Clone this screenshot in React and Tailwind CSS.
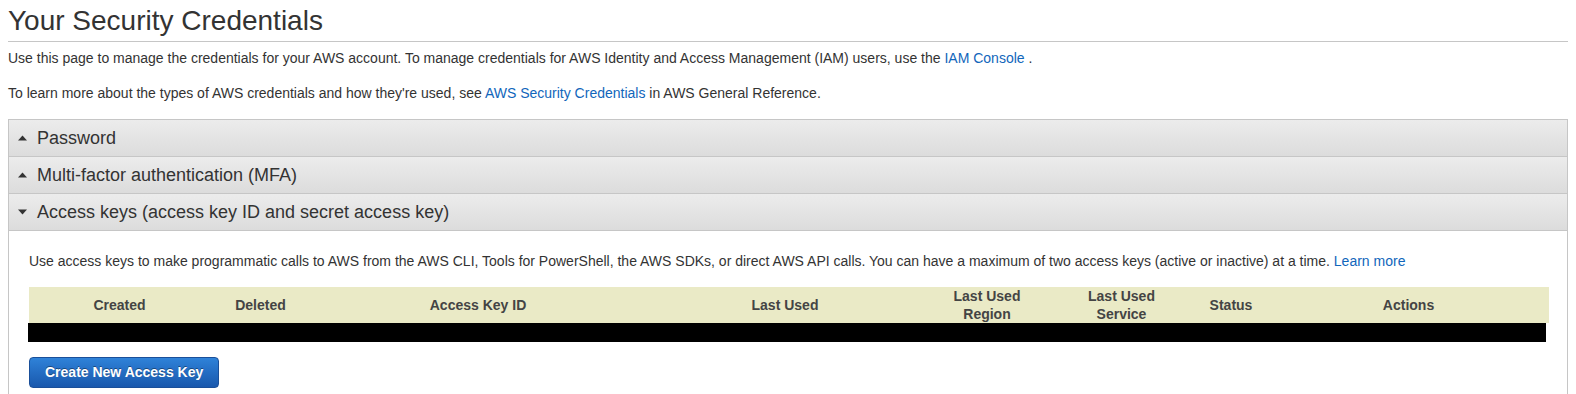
const Caret = ({ open }) => (
    <svg width="9" height="6" viewBox="0 0 9 6" className="mr-[10px] shrink-0">
        {open ? (
            <polygon points="0,0.5 9,0.5 4.5,5.5" fill="#333" />
        ) : (
            <polygon points="0,5.5 9,5.5 4.5,0.5" fill="#333" />
        )}
    </svg>
);

const Section = ({ title, open }) => (
    <div className="flex items-center h-[37px] pl-[9px] border-b border-[#c6c6c6] bg-gradient-to-b from-[#ececec] to-[#dcdcdc] text-[18px] text-[#333]">
        <Caret open={open} />
        <span>{title}</span>
    </div>
);

const columns = [
    { label: "Created" },
    { label: "Deleted" },
    { label: "Access Key ID" },
    { label: "Last Used" },
    { label: "Last Used", sub: "Region" },
    { label: "Last Used", sub: "Service" },
    { label: "Status" },
    { label: "Actions" },
];

export default function App() {
    return (
        <div className="min-h-screen bg-white px-2 font-['Liberation_Sans',Arial,sans-serif] text-[#333]">
            <h1 className="pt-[4px] pb-[3px] text-[28px] leading-[34px] text-[#333] border-b border-[#c6c6c6]">
                Your Security Credentials
            </h1>

            <p className="mt-[8px] text-[14px] leading-[16px]">
                Use this page to manage the credentials for your AWS account. To manage credentials for AWS Identity and Access Management (IAM) users, use the{" "}
                <a className="text-[#1166bb]">IAM Console</a> .
            </p>
            <p className="mt-[19px] text-[14px] leading-[16px]">
                To learn more about the types of AWS credentials and how they're used, see{" "}
                <a className="text-[#1166bb]">AWS Security Credentials</a> in AWS General Reference.
            </p>

            <div className="mt-[18px] border-x border-t border-[#c6c6c6]">
                <Section title="Password" />
                <Section title="Multi-factor authentication (MFA)" />
                <Section title="Access keys (access key ID and secret access key)" open />

                <div className="pl-5 pr-[18px] pt-[22px] pb-6">
                    <p className="text-[14px] leading-[16px]">
                        Use access keys to make programmatic calls to AWS from the AWS CLI, Tools for PowerShell, the AWS SDKs, or direct AWS API calls. You can have a maximum of two access keys (active or inactive) at a time.{" "}
                        <a className="text-[#1166bb]">Learn more</a>
                    </p>

                    <div className="mt-[18px]">
                        <div className="grid grid-cols-[181px_101px_334px_280px_124px_145px_74px_1fr] h-[36px] bg-[#eaeac6] text-[14px] leading-[18px] font-bold text-[#444]">
                            {columns.map((col, i) => (
                                <div key={i} className="flex flex-col items-center justify-center text-center">
                                    <span>{col.label}</span>
                                    {col.sub && <span>{col.sub}</span>}
                                </div>
                            ))}
                        </div>
                        <div className="h-[19px] bg-black -ml-px mr-[3px]"></div>
                    </div>

                    <button className="mt-[15px] h-[31px] px-[15px] rounded-[4px] border border-[#1a4f99] bg-gradient-to-b from-[#2f82d8] to-[#1958ad] text-white text-[14px] font-bold [text-shadow:0_-1px_0_rgba(0,0,0,0.4)]">
                        Create New Access Key
                    </button>
                </div>
            </div>
        </div>
    );
}
